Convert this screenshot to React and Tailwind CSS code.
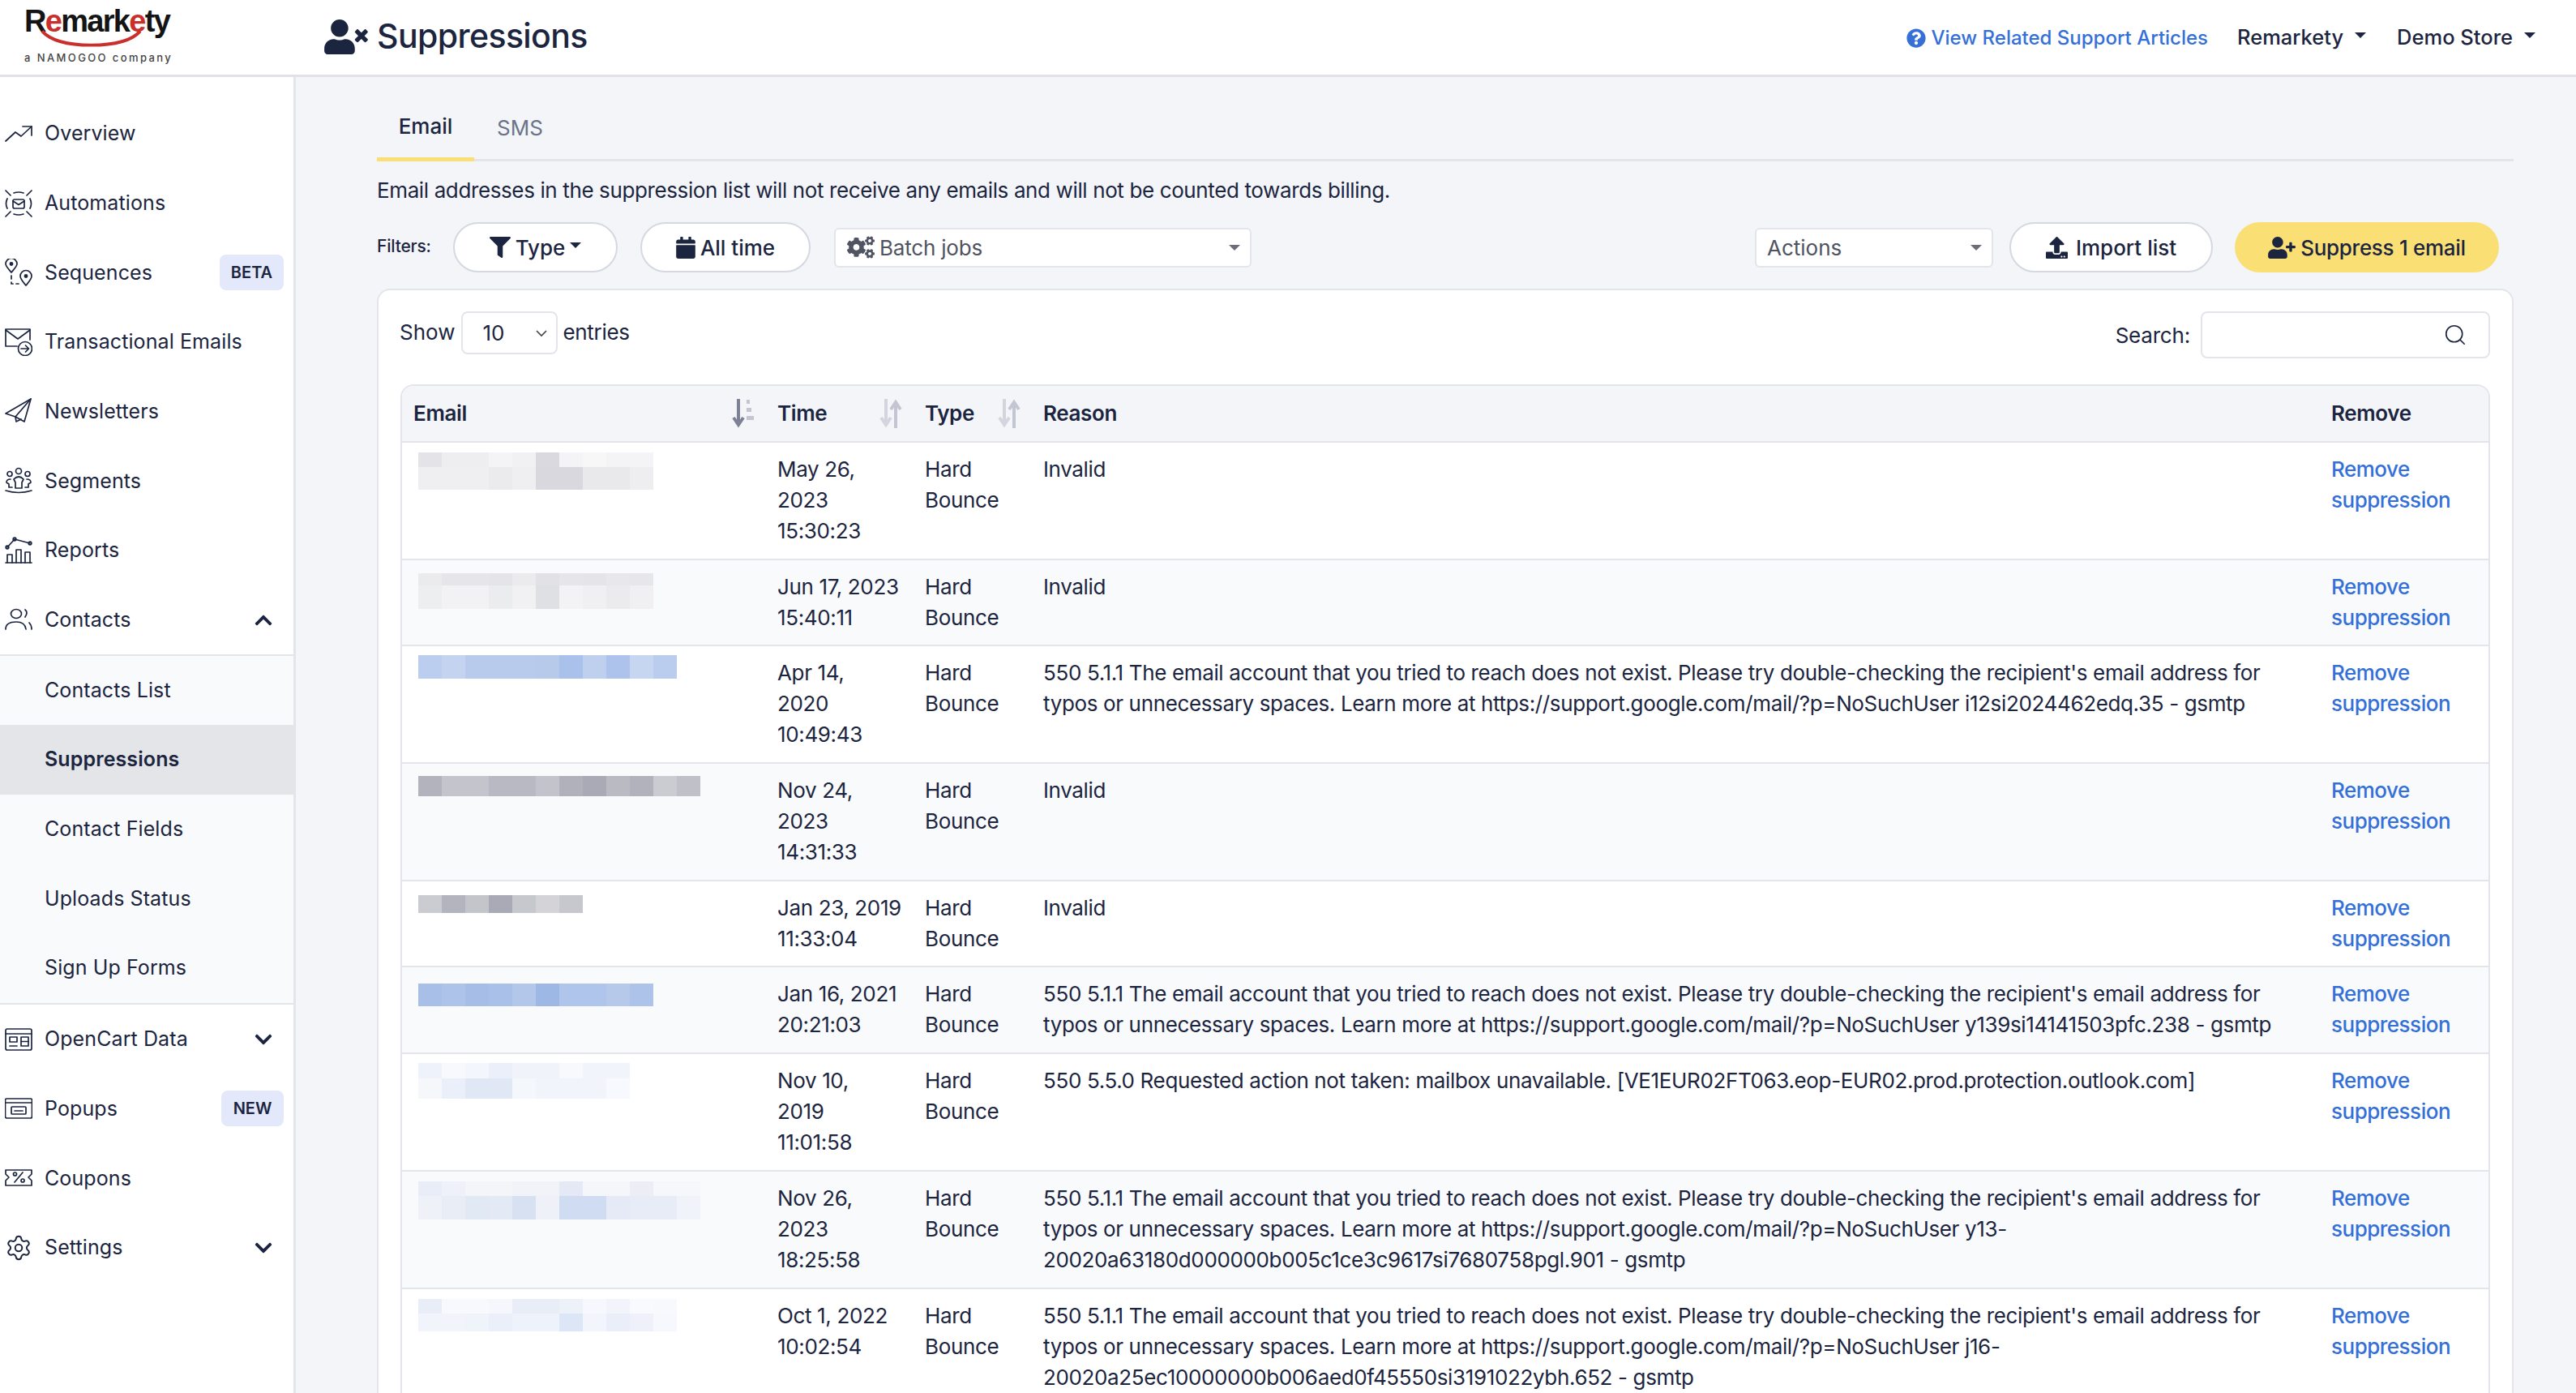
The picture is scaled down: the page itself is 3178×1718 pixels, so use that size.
import React from 'react';
import { Search, Settings } from 'lucide-react';
import { FaUserTimes, FaUserPlus, FaFilter, FaCalendar, FaCogs, FaUpload, FaQuestionCircle, FaChevronUp, FaChevronDown } from 'react-icons/fa';

const Ic = ({ children }) => (
  <svg viewBox="0 0 34 34" fill="none" stroke="currentColor" strokeWidth="1.7" strokeLinecap="round" strokeLinejoin="round" className="w-[34px] h-[34px] shrink-0">
    {children}
  </svg>
);

const icons = {
  overview: <Ic><path d="M1 26 L13 15 L20 20 L33 8" /><path d="M22 8 H33 V19" /></Ic>,
  automations: (
    <Ic>
      <rect x="10" y="12" width="14" height="11" rx="2" />
      <path d="M10 14 L17 18.5 L24 14" />
      <path d="M1 1 L7 7 M33 1 L27 7 M1 33 L7 27 M33 33 L27 27" />
      <path d="M11 4 Q17 2 23 4 M11 30 Q17 32 23 30 M3 11 Q0 17 3 23 M31 11 Q34 17 31 23" />
    </Ic>
  ),
  sequences: (
    <Ic>
      <path d="M8 17 C3 11 1 9 1 6.5 A7 7 0 0 1 15 6.5 C15 9 13 11 8 17 Z" />
      <circle cx="8" cy="6.5" r="1.6" fill="currentColor" />
      <path d="M26 33 C21 27 19 25 19 21.5 A7 7 0 0 1 33 21.5 C33 25 31 27 26 33 Z" />
      <circle cx="26" cy="21.5" r="1.6" fill="currentColor" />
      <path d="M8 21 V31 H17" strokeDasharray="4 4" />
    </Ic>
  ),
  transactional: (
    <Ic>
      <path d="M15 22 H1 V1 H31 V14" />
      <path d="M1 2 L16 13 L31 2" />
      <circle cx="25" cy="25" r="8.5" />
      <path d="M20 25 H29 M25.5 21 L29.5 25 L25.5 29" />
    </Ic>
  ),
  newsletters: (
    <Ic>
      <path d="M32 1 L1 19 L13 23 L24 29 Z" />
      <path d="M32 1 L13 23 L14 29 L20 26" />
    </Ic>
  ),
  segments: (
    <Ic>
      <circle cx="17" cy="5" r="3.5" />
      <circle cx="6" cy="8.5" r="3" />
      <circle cx="28" cy="8.5" r="3" />
      <path d="M11 15 Q17 9 23 15 L21 19 V26 H13 V19 Z" />
      <path d="M7 15 Q2 15 2 19 L5 21 V25 H9 M27 15 Q32 15 32 19 L29 21 V25 H25" />
      <path d="M1 29 Q17 34 33 29" />
    </Ic>
  ),
  reports: (
    <Ic>
      <path d="M1 32 H33" />
      <path d="M3 32 V22 H9 V32 M14 32 V16 H20 V32 M25 32 V19 H31 V32" />
      <path d="M3 13 L12 3 L31 8" />
      <circle cx="3" cy="13" r="1.8" />
      <circle cx="12" cy="3" r="1.8" />
      <circle cx="31" cy="8" r="1.8" />
    </Ic>
  ),
  contacts: (
    <Ic>
      <ellipse cx="14" cy="9" rx="6.5" ry="5.5" />
      <path d="M1 28 Q1 19 14 19 Q25 19 26 28" />
      <path d="M25 4 Q29 7 25 13 M30 20 Q33 23 33 28" />
    </Ic>
  ),
  opencart: (
    <Ic>
      <rect x="1" y="4" width="32" height="26" rx="2" />
      <path d="M1 10 H33" />
      <rect x="6" y="14" width="9" height="6" />
      <rect x="20" y="14" width="9" height="11" />
      <path d="M6 25 H15 M20 19.5 H29" />
    </Ic>
  ),
  popups: (
    <Ic>
      <rect x="0.5" y="5" width="33" height="24" rx="2" />
      <path d="M1 10 H33" />
      <rect x="8" y="15" width="18" height="9" rx="1" />
      <path d="M12 20 H22" />
    </Ic>
  ),
  coupons: (
    <Ic>
      <path d="M1 7 H33 V12 L29 16 L33 20 V26 H1 V20 L5 16 L1 12 Z" />
      <path d="M12 22 L22 10" />
      <circle cx="12.5" cy="12" r="2" />
      <circle cx="22" cy="20" r="2" />
    </Ic>
  ),
  settings: <Settings className="w-[34px] h-[34px] shrink-0" strokeWidth={1.4} />,
};

const navTop = [
  { key: 'overview', label: 'Overview' },
  { key: 'automations', label: 'Automations' },
  { key: 'sequences', label: 'Sequences', badge: 'BETA' },
  { key: 'transactional', label: 'Transactional Emails' },
  { key: 'newsletters', label: 'Newsletters' },
  { key: 'segments', label: 'Segments' },
  { key: 'reports', label: 'Reports' },
  { key: 'contacts', label: 'Contacts', chevron: 'up' },
];
const navSub = ['Contacts List', 'Suppressions', 'Contact Fields', 'Uploads Status', 'Sign Up Forms'];
const navBottom = [
  { key: 'opencart', label: 'OpenCart Data', chevron: 'down' },
  { key: 'popups', label: 'Popups', badge: 'NEW' },
  { key: 'coupons', label: 'Coupons' },
  { key: 'settings', label: 'Settings', chevron: 'down' },
];

const longA = "550 5.1.1 The email account that you tried to reach does not exist. Please try double-checking the recipient's email address for";
const longB = 'typos or unnecessary spaces. Learn more at https://support.google.com/mail/?p=NoSuchUser ';

const rows = [
  {
    time: ['May 26,', '2023', '15:30:23'],
    reason: ['Invalid'],
    top: 'mt-[12px]',
    px: [
      [18, ['e4e4e8', 'eeeef1', 'eeeef1', 'f4f4f6', 'f1f1f3', 'd9d9df', 'f4f4f6', 'f7f7f8', 'f4f4f6', 'f4f4f6']],
      [28, ['efeff1', 'efeff2', 'efeff2', 'ebebee', 'efeff1', 'd8d8de', 'd8d8de', 'e9e9ec', 'e9e9ec', 'eeeef0']],
    ],
  },
  {
    time: ['Jun 17, 2023', '15:40:11'],
    reason: ['Invalid'],
    top: 'mt-[16px]',
    px: [
      [15, ['ebebee', 'e6e6ea', 'e6e6ea', 'e5e5e9', 'ebebee', 'e2e2e6', 'e6e6ea', 'e5e5e9', 'e8e8ec', 'e7e7eb']],
      [29, ['edeef0', 'f2f2f4', 'f2f2f4', 'ebecee', 'f1f1f3', 'dfe0e3', 'f3f3f5', 'f0f0f2', 'ebebee', 'f0f0f2']],
    ],
  },
  {
    time: ['Apr 14,', '2020', '10:49:43'],
    reason: [longA, longB + 'i12si2024462edq.35 - gsmtp'],
    top: 'mt-[11px]',
    px: [[29, ['bccef0', 'c3d3f0', 'b8cbec', 'b8cbec', 'b8cbec', 'b7caea', 'a9c1eb', 'bfd0ee', 'adc3eb', 'c6d6f1', 'bbcdee']]],
  },
  {
    time: ['Nov 24,', '2023', '14:31:33'],
    reason: ['Invalid'],
    top: 'mt-[15px]',
    px: [[25, ['b2b3bd', 'c3c4cc', 'c3c4cc', 'b8b9c2', 'b8b9c2', 'c3c4cb', 'b0b1bb', 'a9aab5', 'b9bac2', 'b1b2bc', 'cbccd1', 'bfc0c8']]],
  },
  {
    time: ['Jan 23, 2019', '11:33:04'],
    reason: ['Invalid'],
    top: 'mt-[17px]',
    px: [[22, ['cbccd2', 'b3b4be', 'c4c5cb', 'a9aab6', 'c7c8ce', 'd3d3d8', 'c7c8ce']]],
  },
  {
    time: ['Jan 16, 2021', '20:21:03'],
    reason: [longA, longB + 'y139si14141503pfc.238 - gsmtp'],
    top: 'mt-[20px]',
    px: [[28, ['a8c0e8', 'adc3e9', 'a5bde7', 'a9c0e8', 'b3c7ea', '9db8e5', 'b0c5eb', 'b0c5eb', 'b6c9ea', 'adc3ea']]],
  },
  {
    time: ['Nov 10,', '2019', '11:01:58'],
    reason: ['550 5.5.0 Requested action not taken: mailbox unavailable. [VE1EUR02FT063.eop-EUR02.prod.protection.outlook.com]'],
    top: 'mt-[11px]',
    px: [
      [19, ['eef2fb', 'f7f9fd', 'f3f6fc', 'ebeff9', 'f0f3fa', 'f0f3fa', 'f7f9fd', 'f1f4fb', 'f1f4fb']],
      [25, ['f5f7fb', 'ebeff9', 'e0e8f6', 'e0e8f6', 'f4f7fc', 'f1f4fa', 'f1f4fa', 'f2f4fb', 'f7f9fe']],
    ],
  },
  {
    time: ['Nov 26,', '2023', '18:25:58'],
    reason: [longA, longB + 'y13-', '20020a63180d000000b005c1ce3c9617si7680758pgl.901 - gsmtp'],
    top: 'mt-[12px]',
    px: [
      [18, ['e8edf8', 'eef1f9', 'f4f5f9', 'f4f5f9', 'f1f3f8', 'f1f3f8', 'e4e9f5', 'f4f6fa', 'f4f6fa', 'ecedf5', 'f6f7fa', 'f6f7fa']],
      [29, ['eef1f8', 'e8edf6', 'e1e9f4', 'e4eaf5', 'd8e1f2', 'eff1f8', 'cfdcf1', 'cfdcf1', 'e5eaf6', 'e7ecf6', 'e7ecf6', 'f1f3fa']],
    ],
  },
  {
    time: ['Oct 1, 2022', '10:02:54'],
    reason: [longA, longB + 'j16-', '20020a25ec10000000b006aed0f45550si3191022ybh.652 - gsmtp'],
    top: 'mt-[12px]',
    px: [
      [18, ['e8edf8', 'f7f9fd', 'f7f9fd', 'f5f7fc', 'e8edf7', 'e8edf7', 'edf1f8', 'f6f8fd', 'f1f4fb', 'f9fafd', 'f8f9fd']],
      [22, ['f1f4fb', 'f1f4fb', 'eff3fa', 'ebeff9', 'eef2fa', 'eef2fa', 'dde6f6', 'f3f5fc', 'e9eef9', 'eef1fa', 'f6f8fe']],
    ],
  },
];

const Caret = ({ color = 'border-t-[#1c2540]' }) => (
  <span className={`inline-block w-0 h-0 border-x-[7px] border-x-transparent border-t-[7px] ${color}`} />
);

const SortIcon = ({ active }) => (
  <svg viewBox="0 0 28 38" className="w-[28px] h-[38px] shrink-0">
    <path d="M8 1 V29 M2 24 L8 33 L14 24" fill="none" stroke={active ? '#7d8196' : '#d2d5de'} strokeWidth="4" />
    {active ? (
      <path d="M18 2 H22 V7 H18 Z M18 12 H24 V17 H18 Z M18 22 H27 V27 H18 Z" fill="#c3c6d2" />
    ) : (
      <path d="M20 37 V9 M14 14 L20 5 L26 14" fill="none" stroke="#c3c6d2" strokeWidth="4" />
    )}
  </svg>
);

const NavItem = ({ item }) => (
  <div className="h-[85.7px] flex items-center pl-[6px] pr-[12px]">
    {icons[item.key]}
    <span className="ml-[15px] text-[25px] leading-none tracking-[0.1px]">{item.label}</span>
    {item.badge && (
      <span className={`ml-auto h-[44px] flex items-center justify-center bg-[#e3e9fa] rounded-[8px] text-[20px] font-semibold ${item.badge === 'NEW' ? 'w-[77px]' : 'w-[79px]'}`}>
        {item.badge}
      </span>
    )}
    {item.chevron === 'up' && <FaChevronUp className="ml-auto mr-[13px] w-[24px] h-[24px]" />}
    {item.chevron === 'down' && <FaChevronDown className="ml-auto mr-[13px] w-[24px] h-[24px]" />}
  </div>
);

const PixelBlock = ({ row }) => (
  <div className={`ml-[20px] ${row.top}`}>
    {row.px.map(([h, colors], i) => (
      <div key={i} className="flex">
        {colors.map((c, j) => (
          <div key={j} className="w-[29px]" style={{ height: h, backgroundColor: `#${c}` }} />
        ))}
      </div>
    ))}
  </div>
);

const App = () => {
  return (
    <div className="h-[1718px] overflow-hidden flex flex-col bg-[#f3f5f9] text-[#1c2540] font-['Inter',sans-serif]">
      <header className="h-[95px] shrink-0 bg-white border-b-[3px] border-[#e0e2e8] flex items-center relative">
        <div className="w-[400px] shrink-0 pl-[30px] relative h-full">
          <div className="pt-[3px] text-[38px] leading-[46px] font-bold tracking-[-1.7px] text-[#141414] font-['Liberation_Sans',sans-serif]">
            R<span className="text-[#c9302c]">e</span>mark<span className="text-[#c9302c]">e</span>ty
          </div>
          <svg viewBox="0 0 130 24" className="absolute left-[50px] top-[36px] w-[125px] h-[24px]">
            <path d="M2 2 Q18 20 65 20 Q112 20 128 2" fill="none" stroke="#c9302c" strokeWidth="4" />
          </svg>
          <div className="mt-[14px] text-[13px] leading-[16px] font-medium tracking-[2.4px] text-[#444] whitespace-nowrap">a NAMOGOO company</div>
        </div>
        <FaUserTimes className="w-[54px] h-[43px] mb-[2px]" />
        <h1 className="ml-[11px] mb-[3px] text-[41px] font-medium leading-none tracking-[-0.6px]">Suppressions</h1>
        <div className="ml-auto flex items-center pr-[50px]">
          <a className="flex items-center text-[24px] font-medium text-[#3470d8] mt-[2px]">
            <FaQuestionCircle className="w-[24px] h-[24px] mr-[7px]" />
            View Related Support Articles
          </a>
          <span className="ml-[36px] text-[25.5px] font-medium flex items-center">Remarkety<span className="ml-[14px] mb-[6px] flex"><Caret /></span></span>
          <span className="ml-[38px] text-[25.5px] font-medium flex items-center">Demo Store<span className="ml-[14px] mb-[6px] flex"><Caret /></span></span>
        </div>
      </header>

      <div className="flex flex-1 min-h-0">
        <aside className="w-[365px] shrink-0 bg-white border-r-[3px] border-[#e3e5ea] pt-[27px]">
          {navTop.map((item) => <NavItem key={item.key} item={item} />)}
          <div className="-mt-[1px] bg-[#f9fafc] border-y-2 border-[#e3e5ea]">
            {navSub.map((label) => (
              <div
                key={label}
                className={`h-[85.7px] flex items-center pl-[55px] text-[25px] tracking-[0.1px] ${label === 'Suppressions' ? 'bg-[#e4e5e9] font-semibold' : ''}`}
              >
                {label}
              </div>
            ))}
          </div>
          {navBottom.map((item) => <NavItem key={item.key} item={item} />)}
        </aside>

        <main className="flex-1 min-w-0 pl-[100px] pr-[77px] pt-[18px] overflow-hidden">
          <div className="flex border-b-[3px] border-[#e3e5ea] h-[86px]">
            <div className="w-[120px] h-[86px] pt-[4px] border-b-[5px] border-[#fadf75] flex items-center justify-center text-[26px] font-medium">Email</div>
            <div className="ml-[28px] h-[83px] pt-[6px] flex items-center text-[26px] text-[#6b7389]">SMS</div>
          </div>

          <p className="mt-[17px] text-[26px] leading-[38px] tracking-[-0.38px]">
            Email addresses in the suppression list will not receive any emails and will not be counted towards billing.
          </p>

          <div className="mt-[20px] h-[62px] flex items-center pr-[18px]">
            <span className="w-[94px] mb-[2px] text-[21px] font-medium tracking-[-0.2px]">Filters:</span>
            <button className="w-[203px] h-[62px] rounded-full bg-white border-2 border-[#d5d8e0] flex items-center justify-center text-[26px] font-medium">
              <FaFilter className="w-[26px] h-[26px] mr-[6px]" />Type<span className="ml-[6px] mb-[6px] flex"><Caret /></span>
            </button>
            <button className="ml-[28px] w-[210px] h-[62px] rounded-full bg-white border-2 border-[#d5d8e0] flex items-center justify-center text-[26px] font-medium">
              <FaCalendar className="w-[24px] h-[27px] mr-[6px]" />All time
            </button>
            <div className="ml-[29px] w-[515px] h-[49px] rounded-[6px] bg-white border-2 border-[#e3e5ea] flex items-center pl-[14px] pr-[12px] text-[26px] tracking-[-0.2px] text-[#4f5362]">
              <FaCogs className="w-[34px] h-[28px] mr-[6px]" />Batch jobs
              <span className="ml-auto flex"><Caret color="border-t-[#6b6e78]" /></span>
            </div>
            <div className="ml-auto w-[294px] h-[49px] rounded-[6px] bg-white border-2 border-[#e3e5ea] flex items-center pl-[13px] pr-[12px] text-[26px] text-[#4f5362]">
              Actions
              <span className="ml-auto flex"><Caret color="border-t-[#6b6e78]" /></span>
            </div>
            <button className="ml-[20px] w-[251px] h-[62px] rounded-full bg-white border-2 border-[#d5d8e0] flex items-center justify-center text-[26px] font-medium">
              <FaUpload className="w-[27px] h-[27px] mr-[10px]" />Import list
            </button>
            <button className="ml-[27px] w-[326px] h-[62px] rounded-full bg-[#fadf75] flex items-center justify-center text-[26px] tracking-[-0.3px] font-medium">
              <FaUserPlus className="w-[34px] h-[27px] mr-[6px]" />Suppress 1 email
            </button>
          </div>

          <div className="mt-[20px] bg-white border-2 border-[#e3e5ea] rounded-t-[16px] px-[27px] pt-[26px] h-[1400px]">
            <div className="flex items-start h-[58px]">
              <span className="text-[26px] mt-[6px] -ml-[1px]">Show</span>
              <div className="ml-[8px] w-[119px] h-[53px] bg-white border-2 border-[#e3e5ea] rounded-[8px] flex items-center pl-[24px] pr-[10px] text-[26px]">
                10
                <svg viewBox="0 0 16 10" className="ml-auto w-[16px] h-[10px]">
                  <path d="M2 2 L8 8 L14 2" fill="none" stroke="#444" strokeWidth="1.6" />
                </svg>
              </div>
              <span className="ml-[6px] text-[26px] mt-[6px] tracking-[-0.3px]">entries</span>
              <span className="ml-auto text-[26px] mt-[10px] tracking-[-0.2px]">Search:</span>
              <div className="ml-[13px] w-[357px] h-[58px] bg-white border-2 border-[#e3e5ea] rounded-[8px] flex items-center justify-end pr-[26px]">
                <Search className="w-[30px] h-[30px]" strokeWidth={1.3} />
              </div>
            </div>

            <div className="mt-[32px] border-x-2 border-t-2 border-[#e3e5ea] rounded-t-[16px] overflow-hidden">
              <table className="w-full table-fixed border-collapse text-[26px] leading-[38px] tracking-[-0.36px]">
                <colgroup>
                  <col className="w-[447px]" />
                  <col className="w-[182px]" />
                  <col className="w-[146px]" />
                  <col className="w-[1589px]" />
                  <col />
                </colgroup>
                <thead>
                  <tr className="bg-[#f3f5f9] border-b-2 border-[#e3e5ea] h-[69px] text-left">
                    <th className="pl-[14px] pr-[12px] font-semibold"><div className="flex items-center justify-between">Email<SortIcon active /></div></th>
                    <th className="pl-[16px] pr-[12px] font-semibold"><div className="flex items-center justify-between">Time<SortIcon /></div></th>
                    <th className="pl-[16px] pr-[12px] font-semibold"><div className="flex items-center justify-between">Type<SortIcon /></div></th>
                    <th className="pl-[16px] font-semibold">Reason</th>
                    <th className="pl-[16px] font-semibold">Remove</th>
                  </tr>
                </thead>
                <tbody>
                  {rows.map((row, i) => {
                    // two of the short rows come out a pixel taller than the reference
                    const pad = i === 1 || i === 4 ? 'pt-[14px] pb-[14px]' : 'pt-[14px] pb-[15px]';
                    return (
                      <tr key={i} className={`border-b-2 border-[#e3e5ea] align-top ${i % 2 ? 'bg-[#f9fafc]' : 'bg-white'}`}>
                        <td><PixelBlock row={row} /></td>
                        <td className={`${pad} pl-[16px] whitespace-nowrap`}>
                          {row.time.map((t) => <div key={t}>{t}</div>)}
                        </td>
                        <td className={`${pad} pl-[16px]`}><div>Hard</div><div>Bounce</div></td>
                        <td className={`${pad} pl-[16px] whitespace-nowrap`}>
                          {row.reason.map((r) => <div key={r}>{r}</div>)}
                        </td>
                        <td className={`${pad} pl-[16px] text-[#3470d8] font-medium tracking-[-0.5px]`}>
                          <div>Remove</div><div>suppression</div>
                        </td>
                      </tr>
                    );
                  })}
                </tbody>
              </table>
            </div>
          </div>
        </main>
      </div>
    </div>
  );
};

export default App;
